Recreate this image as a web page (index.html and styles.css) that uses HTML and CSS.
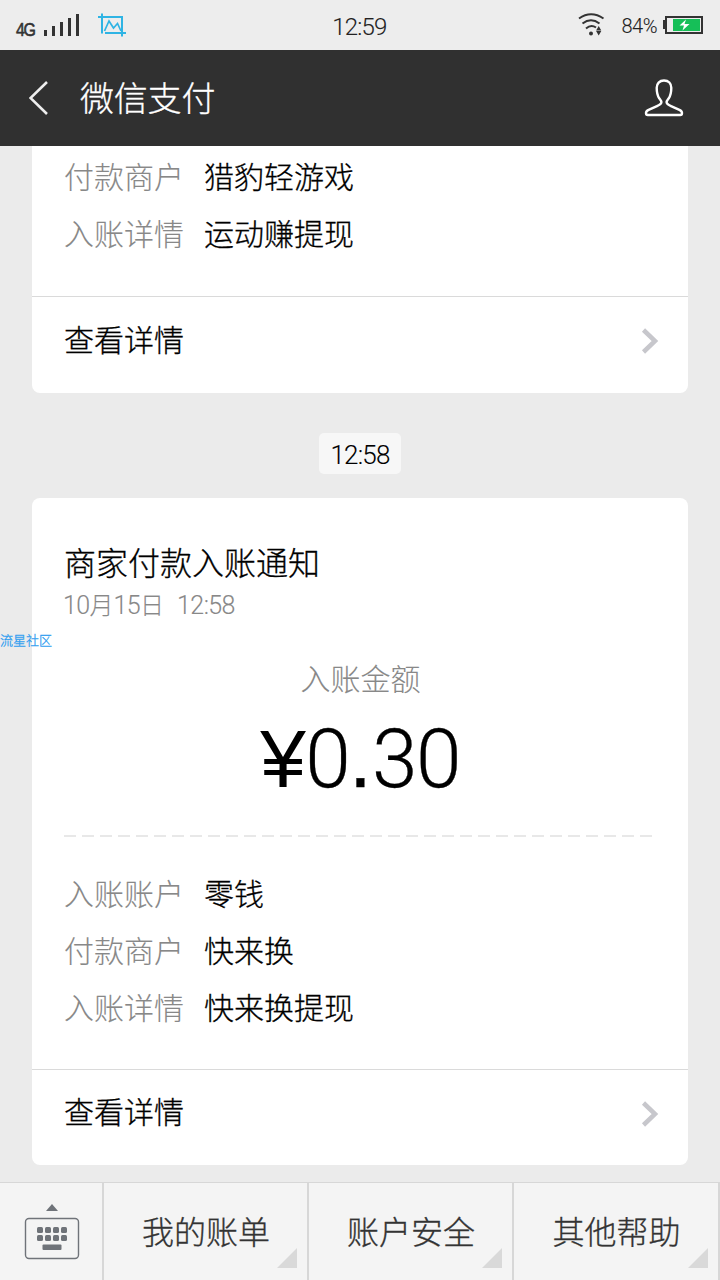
FILE: index.html
```html
<!DOCTYPE html>
<html lang="zh-CN">
<head>
<meta charset="utf-8">
<title>微信支付</title>
<link rel="stylesheet" href="styles.css">
</head>
<body>
<div class="screen">
  <div class="status">
    <div class="status-left">
      <span class="network">4G</span>
      <svg class="signal" width="36" height="22" viewBox="0 0 36 22"><path fill="#333" d="M0 16h3v6H0zM8 12h3v10H8zM16 8h3v14h-3zM24 4h3v18h-3zM32 0h3v22h-3z"/></svg>
      <svg class="crop" width="28" height="24" viewBox="0 0 28 24" fill="none" stroke="#2fb4e4"><path stroke-width="2" d="M4 0.500V20.500M0 4H24V23.500M7 20H28"/><path stroke-width="1.700" d="M6.500 18L11 8l4.500 7 4-4.500L23 18"/></svg>
    </div>
    <span class="clock">12:59</span>
    <div class="status-right">
      <svg class="wifi" width="27" height="24" viewBox="0 0 27 24"><g fill="none" stroke="#333" stroke-width="2"><path d="M1 5.500Q13 -3 25.500 5.500M4.500 10.500Q13 4 21.500 10.500M8 15.500Q13 11 18 14.500"/></g><circle cx="13" cy="20.500" r="2" fill="#333"/><path fill="#333" d="M20.700 13l2.600 4.500h-5.200zM20.700 22.500l2.600-4.500h-5.200z"/></svg>
      <span class="percent">84%</span>
      <svg width="40" height="18" viewBox="0 0 40 18"><path fill="#333" d="M0 4h2v9H0z"/><path fill="none" stroke="#333" stroke-width="2" d="M3 1h36v16H3z"/><path fill="#16bf58" d="M10 3h27v12H10z"/><path fill="#fff" d="M23 3.500L16.500 9.500h4.500L19.500 14.500 26.500 8h-5z"/></svg>
    </div>
  </div>
  <header class="header">
    <svg class="back" width="20" height="34" viewBox="0 0 20 34"><path fill="none" stroke="#eee" stroke-width="2.600" d="M18 1L1.500 17l16.500 16"/></svg>
    <h1 class="header-title">微信支付</h1>
    <svg class="profile" width="40" height="38" viewBox="0 0 40 38"><path fill="none" stroke="#fff" stroke-width="2.400" stroke-linejoin="round" d="M20 1.500c-4.600 0-7.300 3.200-7.300 7.300 0 5 .6 7.600 2.500 10.500 1.300 1.800 2.400 2.600 2.200 4-.2 1.900-2.200 2.700-5 4L4.600 30.800C2.700 31.700 2 32.300 2 34c0 1.400.5 2 1.700 2h32.600c1.200 0 1.700-.6 1.700-2 0-1.700-.7-2.300-2.600-3.200l-7.800-3.500c-2.800-1.300-4.800-2.100-5-4-.2-1.400.9-2.200 2.200-4 1.900-2.900 2.500-5.500 2.500-10.500 0-4.100-2.700-7.300-7.300-7.300z"/></svg>
  </header>
  <main class="messages">
    <section class="card card-continued">
      <dl class="details">
        <div class="row"><dt>付款商户</dt><dd>猎豹轻游戏</dd></div>
        <div class="row"><dt>入账详情</dt><dd>运动赚提现</dd></div>
      </dl>
      <div class="more"><span>查看详情</span><svg width="18" height="26" viewBox="0 0 18 26"><path fill="none" stroke="#c7c7cc" stroke-width="4.500" d="M2.500 2L14 13 2.500 24"/></svg></div>
    </section>
    <div class="time">12:58</div>
    <section class="card">
      <h2 class="card-title">商家付款入账通知</h2>
      <p class="date"><span class="num">10</span>月<span class="num">15</span>日<span class="num hour">12:58</span></p>
      <p class="amount-label">入账金额</p>
      <p class="amount"><span class="yen">¥</span><span>0</span><span class="point">.</span><span>30</span></p>
      <div class="dashes"></div>
      <dl class="details">
        <div class="row"><dt>入账账户</dt><dd>零钱</dd></div>
        <div class="row"><dt>付款商户</dt><dd>快来换</dd></div>
        <div class="row"><dt>入账详情</dt><dd>快来换提现</dd></div>
      </dl>
      <div class="more"><span>查看详情</span><svg width="18" height="26" viewBox="0 0 18 26"><path fill="none" stroke="#c7c7cc" stroke-width="4.500" d="M2.500 2L14 13 2.500 24"/></svg></div>
    </section>
  </main>
  <nav class="menu">
    <div class="keyboard">
      <svg width="56" height="58" viewBox="0 0 56 58"><path fill="#6f7379" d="M28 1l6 7H22z"/><rect x="1.500" y="15.500" width="53" height="40" rx="3.500" fill="none" stroke="#6f7379" stroke-width="1.400"/><g fill="#6f7379"><rect x="13" y="24" width="6" height="6" rx="1.500"/><rect x="21" y="24" width="6" height="6" rx="1.500"/><rect x="29" y="24" width="6" height="6" rx="1.500"/><rect x="37" y="24" width="6" height="6" rx="1.500"/><rect x="13" y="32" width="6" height="6" rx="1.500"/><rect x="21" y="32" width="6" height="6" rx="1.500"/><rect x="29" y="32" width="6" height="6" rx="1.500"/><rect x="37" y="32" width="6" height="6" rx="1.500"/><rect x="18.500" y="41.500" width="19" height="5.500" rx="1"/></g></svg>
    </div>
    <div class="menu-item">我的账单</div>
    <div class="menu-item">账户安全</div>
    <div class="menu-item">其他帮助</div>
  </nav>
  <span class="watermark">流星社区</span>
</div>
</body>
</html>
```
FILE: styles.css
```css
* { box-sizing: border-box; }
body { margin: 0; }
h1, h2, p, dl, dd { margin: 0; font-weight: inherit; }
svg { display: block; flex: none; }

.screen {
  position: relative;
  display: flex;
  flex-direction: column;
  width: 720px;
  height: 1280px;
  overflow: hidden;
  background: #ebebeb;
  color: #000;
  font-family: "Noto Sans CJK SC", sans-serif;
  font-weight: 300;
  -webkit-text-stroke: 0.3px currentColor;
}

.status {
  display: grid;
  grid-template-columns: 1fr auto 1fr;
  align-items: center;
  height: 50px;
  padding: 0 17px 0 16px;
  background: #ededed;
  color: #222;
  font-family: Roboto, sans-serif;
  -webkit-text-stroke: 0.1px currentColor;
}
.status-left, .status-right { display: flex; align-items: center; }
.status-right { justify-content: flex-end; }
.network {
  width: 28px;
  padding-top: 10px;
  font: 400 19px/20px "Liberation Sans", sans-serif;
  letter-spacing: -1.5px;
  color: #333;
  -webkit-text-stroke: 0.6px #333;
  transform: scaleX(0.84);
  transform-origin: left;
}
.crop { margin-left: 18px; }
.clock { padding-top: 3px; font-size: 24px; letter-spacing: -0.8px; }
.wifi { margin-right: 17px; }
.percent { padding-top: 2px; margin-right: 6px; font-size: 20px; letter-spacing: -0.5px; }

.header {
  display: flex;
  align-items: center;
  height: 96px;
  padding: 0 36px 0 29px;
  background: #303030;
  color: #fff;
}
.header-title { margin-left: 31px; font-size: 34px; line-height: 40px; letter-spacing: -0.2px; padding-bottom: 3px; }
.profile { margin-left: auto; }

.messages { flex: 1; padding: 0 32px; }
.card {
  display: flex;
  flex-direction: column;
  height: 667px;
  padding-top: 41px;
  border-radius: 8px;
  background: #fff;
}
.card-continued { height: 247px; padding-top: 1px; border-radius: 0 0 8px 8px; }
.row { display: flex; gap: 20px; padding-left: 32px; font-size: 30px; line-height: 57px; }
.row dt { color: #888; -webkit-text-stroke-width: 0.1px; }
.more {
  display: flex;
  align-items: center;
  justify-content: space-between;
  height: 96px;
  margin-top: auto;
  padding: 0 29px 0 32px;
  border-top: 1px solid #dadada;
  font-size: 30px;
  line-height: 40px;
}
.card-continued .more { height: 97px; }
.more span { padding-bottom: 15px; }
.more svg { margin-top: -8px; }

.time {
  width: 82px;
  height: 41px;
  margin: 40px auto 24px;
  border-radius: 5px;
  background: #f7f7f7;
  font: 300 26px/44px Roboto, sans-serif;
  letter-spacing: -0.8px;
  text-align: center;
  -webkit-text-stroke-width: 0.1px;
}
.card-title { padding-left: 32px; font-size: 32px; line-height: 44px; }
.date { padding-left: 31px; font-size: 24px; line-height: 42px; color: #888; -webkit-text-stroke-width: 0.1px; }
.num { font-family: Roboto, sans-serif; font-size: 25px; letter-spacing: -0.6px; }
.hour { margin-left: 13px; }
.amount-label { margin-top: 28px; padding-left: 1px; text-align: center; font-size: 30px; line-height: 44px; color: #888; -webkit-text-stroke-width: 0.1px; }
.amount {
  display: flex;
  justify-content: center;
  height: 92px;
  margin-top: 14px;
  font: 300 82px/92px Roboto, sans-serif;
  letter-spacing: -1.6px;
  -webkit-text-stroke: 0.3px #000;
}
.yen {
  width: 45px;
  font-family: "Liberation Sans", sans-serif;
  font-weight: 400;
  -webkit-text-stroke: 0;
}
.point { width: 23px; font-family: "Liberation Sans", sans-serif; font-weight: 400; }
.dashes {
  height: 2px;
  margin: 30px 32px 27px;
  background: repeating-linear-gradient(90deg, #e8e8e8 0 12px, transparent 12px 18px);
}

.menu {
  display: grid;
  grid-template-columns: 104px 205px 205px 206px;
  height: 98px;
  border-top: 1px solid #d7d7d7;
  background: #f4f4f4;
  color: #333;
}
.keyboard, .menu-item { display: flex; align-items: center; justify-content: center; border-right: 2px solid #d7d7d7; }
.keyboard { padding-left: 1px; }
.menu-item { position: relative; padding: 0 0 4px 1px; font-size: 32px; line-height: 44px; }
.menu-item::after {
  content: "";
  position: absolute;
  right: 10px;
  bottom: 12px;
  width: 20px;
  height: 20px;
  background: #d9d9d9;
  clip-path: polygon(100% 0, 100% 100%, 0 100%);
}
.watermark {
  position: absolute;
  top: 630px;
  left: 0;
  color: #2c9cf0;
  font-size: 13px;
  line-height: 20px;
}
```
